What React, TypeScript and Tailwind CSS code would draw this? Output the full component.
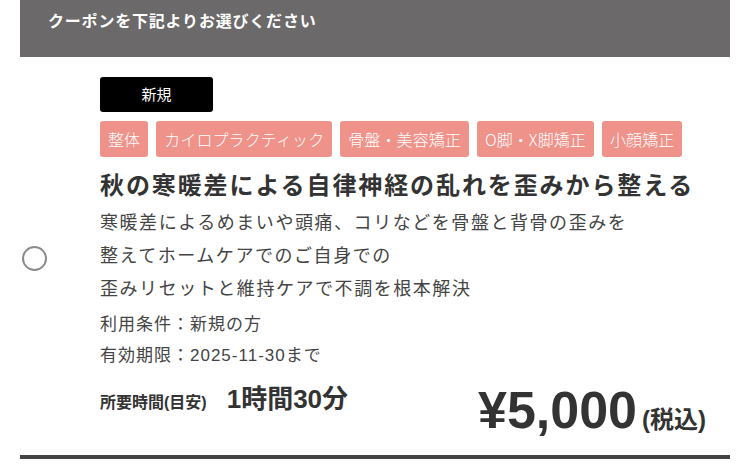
import React from 'react';

const tags = ['整体', 'カイロプラクティック', '骨盤・美容矯正', 'O脚・X脚矯正', '小顔矯正'];

export default function App() {
    return (
        <div
            className="w-[750px] h-[470px] bg-white overflow-hidden"
            style={{ fontFamily: '"Noto Sans CJK JP", "Noto Sans", sans-serif' }}
        >
            <div className="mx-[20px]">
                {/* Header */}
                <div className="h-[57px] bg-[#6b6969] pl-[28px] pt-[8px]">
                    <p className="text-[16px] font-bold text-white tracking-[0.8px] leading-[24px]">
                        クーポンを下記よりお選びください
                    </p>
                </div>

                {/* Coupon */}
                <div className="flex items-center border-b-4 border-[#444444] pt-[20px] pb-[16px]">
                    <div className="ml-[2px] w-[25px] h-[25px] rounded-full border-[2.5px] border-[#8a8a8a] shrink-0" />
                    <div className="ml-[53px] flex-1 min-w-0">
                        <div className="w-[113px] h-[35px] bg-black rounded-[3px] flex items-center justify-center text-white text-[15px]">
                            新規
                        </div>
                        <div className="mt-[9px] flex gap-[8px]">
                            {tags.map((t) => (
                                <span
                                    key={t}
                                    className="h-[36px] px-[8px] rounded-[3px] bg-[#ef928a] text-white text-[16px] tracking-[0.1px] flex items-center font-light"
                                >
                                    {t}
                                </span>
                            ))}
                        </div>
                        <h2 className="mt-[9px] text-[24px] leading-[36px] font-bold text-[#333333] tracking-[1.9px] whitespace-nowrap">
                            秋の寒暖差による自律神経の乱れを歪みから整える
                        </h2>
                        <div className="mt-[3px] text-[18px] leading-[33px] text-[#444444] tracking-[1.55px]">
                            <p>寒暖差によるめまいや頭痛、コリなどを骨盤と背骨の歪みを</p>
                            <p>整えてホームケアでのご自身での</p>
                            <p>歪みリセットと維持ケアで不調を根本解決</p>
                        </div>
                        <div
                            className="mt-[5px] text-[17px] leading-[31px] text-[#444444] tracking-[1px]"
                            style={{ fontFamily: '"Liberation Sans", "Noto Sans CJK JP", sans-serif' }}
                        >
                            <p>利用条件：新規の方</p>
                            <p>有効期限：2025-11-30まで</p>
                        </div>
                        <div
                            className="mt-[10px] flex items-end justify-between pr-[24px] text-[#333333]"
                            style={{ fontFamily: '"Liberation Sans", "Noto Sans CJK JP", sans-serif' }}
                        >
                            <div className="flex items-baseline font-bold pb-[21px] leading-[30px]">
                                <span className="text-[16px]">所要時間(目安)</span>
                                <span className="ml-[20px] text-[26px]">1時間30分</span>
                            </div>
                            <div className="flex items-baseline font-bold">
                                <span className="text-[52px] leading-[58px]">¥5,000</span>
                                <span className="ml-[5px] text-[24px]">(税込)</span>
                            </div>
                        </div>
                    </div>
                </div>
            </div>
        </div>
    );
}
